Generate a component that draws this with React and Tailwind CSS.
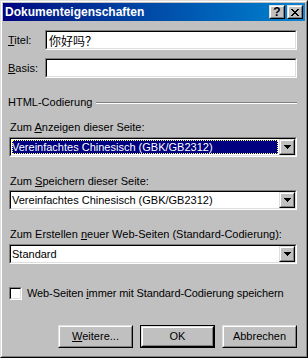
import React from "react";

const RO = "border border-t-[#dfdfdf] border-l-[#dfdfdf] border-r-black border-b-black";
const RI = "border border-t-white border-l-white border-r-[#808080] border-b-[#808080]";
const SO = "border border-t-[#808080] border-l-[#808080] border-r-white border-b-white";
const SI = "border border-t-black border-l-black border-r-[#dfdfdf] border-b-[#dfdfdf]";

function Field({ children }) {
  return (
    <div className={`${SO} h-[20px] flex-1 bg-white`}>
      <div className={`${SI} h-full flex items-center pl-[2px]`}>{children}</div>
    </div>
  );
}

function Arrow() {
  return (
    <svg width="7" height="4" viewBox="0 0 7 4" shapeRendering="crispEdges">
      <rect x="0" y="0" width="7" height="1" fill="#000" />
      <rect x="1" y="1" width="5" height="1" fill="#000" />
      <rect x="2" y="2" width="3" height="1" fill="#000" />
      <rect x="3" y="3" width="1" height="1" fill="#000" />
    </svg>
  );
}

function Select({ text, selected }) {
  return (
    <div className={`${SO} h-[20px] ml-[1px] bg-white`}>
      <div className={`${SI} h-full flex`}>
        <div className="flex-1 flex p-[1px]">
          {selected ? (
            <div className="flex-1 flex items-center bg-[#000080] text-white outline outline-1 outline-dotted outline-[#ffff80] -outline-offset-1">
              {text}
            </div>
          ) : (
            <div className="flex-1 flex items-center">{text}</div>
          )}
        </div>
        <div className={`${RO} w-[16px] h-[16px] bg-[#c0c0c0]`}>
          <div className={`${RI} h-full flex items-center justify-center`}>
            <Arrow />
          </div>
        </div>
      </div>
    </div>
  );
}

function Button({ children, def }) {
  const inner = (
    <div className={`${RO} h-full w-full bg-[#c0c0c0]`}>
      <div className={`${RI} h-full flex items-center justify-center`}>{children}</div>
    </div>
  );
  if (def) {
    return <div className="w-[75px] h-[23px] border border-black">{inner}</div>;
  }
  return <div className="w-[75px] h-[23px]">{inner}</div>;
}

function CapBtn({ children }) {
  return (
    <div className={`${RO} w-[16px] h-[14px] bg-[#c0c0c0]`}>
      <div className={`${RI} h-full flex items-center justify-center`}>{children}</div>
    </div>
  );
}

export default function App() {
  return (
    <div
      className={`${RO} w-[308px] h-[358px] bg-[#c0c0c0] text-black text-[11px] leading-[13px]`}
      style={{ fontFamily: '"Liberation Sans", Arial, sans-serif' }}
    >
      <div className={`${RI} h-full p-[1px] flex flex-col`}>
        <div className="h-[18px] flex items-center pl-[2px] pr-[2px] bg-linear-to-r from-[#000080] to-[#1084d0]">
          <div className="flex-1 text-white font-bold text-[12px]">Dokumenteigenschaften</div>
          <CapBtn>
            <span className="font-bold text-[12px] leading-[11px] mt-[1px]">?</span>
          </CapBtn>
          <div className="w-[2px]" />
          <CapBtn>
            <svg width="8" height="7" viewBox="0 0 8 7" shapeRendering="crispEdges">
              <path d="M0 0h2v1h-2zM6 0h2v1h-2zM1 1h2v1h-2zM5 1h2v1h-2zM2 2h4v1h-4zM3 3h2v1h-2zM2 4h4v1h-4zM1 5h2v1h-2zM5 5h2v1h-2zM0 6h2v1h-2zM6 6h2v1h-2z" fill="#000" />
            </svg>
          </CapBtn>
        </div>

        <div className="flex flex-col pl-[5px] pr-[8px]">
          <div className="flex items-center mt-[9px]">
            <div className="w-[37px]"><u>T</u>itel:</div>
            <Field>
              <span
                className="text-[12px]"
                style={{ fontFamily: '"Noto Sans CJK SC", sans-serif' }}
              >
                你好吗？
              </span>
            </Field>
          </div>
          <div className="flex items-center mt-[8px]">
            <div className="w-[37px]"><u>B</u>asis:</div>
            <Field />
          </div>

          <div className="flex items-center mt-[18px] h-[13px]">
            <span>HTML-Codierung</span>
            <div className="flex-1 ml-[4px] flex flex-col">
              <div className="h-[1px] bg-[#808080]" />
              <div className="h-[1px] bg-white" />
            </div>
          </div>

          <div className="mt-[12px] ml-[2px]">Zum <u>A</u>nzeigen dieser Seite:</div>
          <div className="mt-[3px]">
            <Select text="Vereinfachtes Chinesisch (GBK/GB2312)" selected />
          </div>

          <div className="mt-[18px] ml-[2px]">Zum <u>S</u>peichern dieser Seite:</div>
          <div className="mt-[2px]">
            <Select text="Vereinfachtes Chinesisch (GBK/GB2312)" />
          </div>

          <div className="mt-[18px] ml-[2px]">Zum Erstellen <u>n</u>euer Web-Seiten (Standard-Codierung):</div>
          <div className="mt-[3px]">
            <Select text="Standard" />
          </div>

          <div className="flex items-center mt-[23px] ml-[1px]">
            <div className={`${SO} w-[13px] h-[13px] bg-white`}>
              <div className={`${SI} h-full`} />
            </div>
            <div className="ml-[5px] tracking-[-0.1px]">Web-Seiten <u>i</u>mmer mit Standard-Codierung speichern</div>
          </div>

          <div className="flex justify-end gap-[7px] mt-[25px]">
            <Button><span><u>W</u>eitere...</span></Button>
            <Button def>OK</Button>
            <Button>Abbrechen</Button>
          </div>
        </div>
      </div>
    </div>
  );
}
